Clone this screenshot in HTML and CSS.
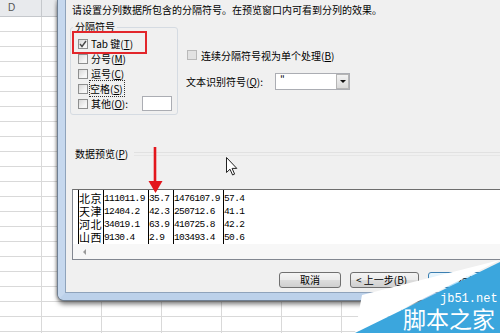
FILE: index.html
```html
<!DOCTYPE html>
<html lang="zh-CN">
<head>
    <meta charset="UTF-8">
    <title>文本分列向导</title>
    <link rel="stylesheet" href="styles.css">
</head>
<body>
<div class="screen">
    <div class="sheet">
        <div class="col-head"><span class="col-d">D</span></div>
        <div class="cells"></div>
    </div>

    <div class="dialog">
        <div class="dlg-body">
            <p class="intro">请设置分列数据所包含的分隔符号。在预览窗口内可看到分列的效果。</p>

            <div class="options">
                <fieldset class="seps">
                    <legend>分隔符号</legend>
                    <div class="chk-row">
                        <span class="chk">
                            <svg width="8" height="8" viewBox="0 0 8 8"><path d="M1 4 L3 6.5 L7 1" fill="none" stroke="#4a4a4a" stroke-width="1.4"/></svg>
                        </span>
                        <span>Tab 键(<u>T</u>)</span>
                    </div>
                    <div class="chk-row"><span class="chk"></span><span>分号(<u>M</u>)</span></div>
                    <div class="chk-row"><span class="chk"></span><span>逗号(<u>C</u>)</span></div>
                    <div class="chk-row"><span class="chk"></span><span class="focus">空格(<u>S</u>)</span></div>
                    <div class="chk-row"><span class="chk"></span><span>其他(<u>O</u>):</span><span class="other-box"></span></div>
                </fieldset>

                <div class="side">
                    <div class="chk-row"><span class="chk dim"></span><span>连续分隔符号视为单个处理(<u>B</u>)</span></div>
                    <div class="qualifier">
                        <span class="q-label">文本识别符号(<u>Q</u>):</span>
                        <div class="combo">
                            <span class="combo-val">"</span>
                            <span class="combo-btn"><span class="tri-down"></span></span>
                        </div>
                    </div>
                </div>
            </div>

            <div class="preview-head">
                <span>数据预览(<u>P</u>)</span>
                <span class="rule"></span>
            </div>

            <div class="preview">
                <div class="cols">
                    <div class="pcol cjk w1"><div>北京</div><div>天津</div><div>河北</div><div>山西</div></div>
                    <div class="pcol w2"><div>111011.9</div><div>12404.2</div><div>34019.1</div><div>9130.4</div></div>
                    <div class="pcol w3"><div>35.7</div><div>42.3</div><div>63.9</div><div>2.9</div></div>
                    <div class="pcol w4"><div>1476107.9</div><div>250712.6</div><div>410725.8</div><div>103493.4</div></div>
                    <div class="pcol w5"><div>57.4</div><div>41.1</div><div>42.2</div><div>50.6</div></div>
                </div>
                <div class="hscroll"><span class="tri-left"></span></div>
            </div>

            <div class="buttons">
                <button class="btn b-cancel">取消</button>
                <button class="btn b-back">&lt; 上一步(<u>B</u>)</button>
                <button class="btn b-next">下一步(<u>N</u>) &gt;</button>
            </div>
        </div>
    </div>

    <!-- annotations drawn over the screenshot -->
    <div class="callout"></div>
    <svg class="red-arrow" width="16" height="48" viewBox="0 0 16 48">
        <path d="M7 0 V36" stroke="#e3161c" stroke-width="2.6"/>
        <path d="M0.5 34 L14.5 34 L7.5 46 Z" fill="#e3161c"/>
    </svg>
    <svg class="cursor" width="12" height="19" viewBox="0 0 12 19">
        <path d="M0.5 0.5 L0.5 15.5 L4 12.2 L6.6 18 L8.6 17.1 L6.1 11.4 L10.8 11.4 Z" fill="#fff" stroke="#222" stroke-width="1"/>
    </svg>

    <div class="mark">
        <svg width="160" height="78" viewBox="0 0 160 78">
            <polygon points="22,40 160,5 15,78" fill="#fff"/>
            <polygon points="160,7 15,78 160,78" fill="#3ba6dd"/>
        </svg>
        <span class="mark-url">jb51.net</span>
        <span class="mark-name">脚本之家</span>
    </div>
</div>
</body>
</html>
```

FILE: styles.css
```css
* {
    box-sizing: border-box;
}
body {
    margin: 0;
    font-family: "Noto Sans CJK SC", sans-serif;
    font-size: 10px;
    color: #000;
    background: #fff;
}
.screen {
    position: relative;
    width: 500px;
    height: 333px;
    overflow: hidden;
}

/* excel sheet behind the dialog */
.sheet {
    height: 100%;
}
.col-head {
    height: 17px;
    border-bottom: 1px solid #c5c8cc;
    background-color: #e8eaed;
    background-image: linear-gradient(to right, transparent 59px, #c5c8cc 59px, #c5c8cc 60px);
    background-size: 60px 100%;
    background-position: -18px 0;
    font-family: "Liberation Sans", sans-serif;
    color: #555;
    line-height: 16px;
}
.col-d {
    padding-left: 8px;
}
.cells {
    height: 316px;
    background-image:
        linear-gradient(to right, transparent 59px, #d9d9d9 59px, #d9d9d9 60px),
        linear-gradient(to bottom, transparent 14px, #d9d9d9 14px, #d9d9d9 15px);
    background-size: 60px 100%, 100% 15px;
    background-position: -18px 0, 0 0;
}

/* dialog window */
.dialog {
    position: absolute;
    left: 58px;
    top: 0;
    width: 470px;
    height: 300px;
    border-left: 7px solid #c6d8ee;
    border-bottom: 7px solid #bcd1ea;
    border-bottom-left-radius: 6px;
    box-shadow: -1px 0 0 #6f7f92, 0 1px 0 #6f7f92, 0 4px 5px rgba(0, 0, 0, 0.55), -2px 0 3px rgba(0, 0, 0, 0.25);
}
.dlg-body {
    height: 293px;
    background: #f0f0f0;
    border-left: 1px solid #8fa3bb;
    border-bottom: 1px solid #8fa3bb;
    padding: 4px 0 0 4px;
}
.intro {
    margin: 0 0 0 2px;
    line-height: 12px;
    white-space: nowrap;
}
.options {
    display: flex;
    align-items: flex-start;
    margin-top: 5px;
}
.seps {
    flex: none;
    width: 108px;
    margin: 0;
    padding: 3px 0 3px 0;
    border: 1px solid #d5dbe2;
    border-radius: 3px;
}
.seps legend {
    margin-left: 2px;
    padding: 0 2px;
    line-height: 12px;
}
.chk-row {
    display: flex;
    align-items: center;
    height: 15px;
    white-space: nowrap;
}
.chk {
    flex: none;
    display: flex;
    align-items: center;
    justify-content: center;
    width: 10px;
    height: 10px;
    margin: 0 3px 0 7px;
    border: 1px solid #8e8f8f;
    background: linear-gradient(135deg, #d8d8d8, #f6f6f6 70%);
}
.chk.dim {
    border-color: #b9b9b9;
    background: #e2e2e2;
    margin-left: 1px;
    margin-right: 4px;
}
.focus {
    outline: 1px dotted #333;
    outline-offset: 0;
    padding: 0 1px 0 0;
    margin-left: -1px;
}
.other-box {
    flex: none;
    width: 30px;
    height: 15px;
    margin: 0 5px 0 auto;
    border: 1px solid #abadb3;
    background: #fff;
}
.side {
    flex: none;
    margin-left: 8px;
    padding-top: 27px;
}
.side .chk-row {
    height: 14px;
}
.qualifier {
    display: flex;
    align-items: center;
    margin-top: 11px;
    white-space: nowrap;
}
.q-label {
    flex: none;
    width: 89px;
}
.combo {
    flex: none;
    display: flex;
    justify-content: space-between;
    width: 75px;
    height: 17px;
    border: 1px solid #abadb3;
    background: #fff;
}
.combo-val {
    padding-left: 4px;
    line-height: 12px;
}
.combo-btn {
    display: flex;
    align-items: center;
    justify-content: center;
    width: 13px;
    border: 1px solid #b5b5b5;
    background: linear-gradient(#f3f3f3, #d9d9d9);
}
.tri-down {
    border-left: 3px solid transparent;
    border-right: 3px solid transparent;
    border-top: 3px solid #111;
}

/* data preview */
.preview-head {
    display: flex;
    align-items: center;
    margin: 33px 0 0 5px;
    line-height: 12px;
    white-space: nowrap;
}
.rule {
    flex: 1;
    height: 4px;
    margin-left: 6px;
    border-top: 1px solid #e1e1e1;
    border-bottom: 1px solid #e6e6e6;
}
.preview {
    width: 450px;
    height: 71px;
    margin: 29px 0 0 2px;
    border: 1px solid #828790;
    border-top-color: #6d6d6d;
    background: #fff;
}
.cols {
    display: flex;
    padding-left: 5px;
}
.pcol {
    flex: none;
    overflow: hidden;
    border-left: 1px solid #000;
    padding-top: 2px;
    font-family: "Liberation Mono", monospace;
    font-size: 9.5px;
    letter-spacing: -0.6px;
    line-height: 13px;
    white-space: nowrap;
}
.pcol.cjk {
    font-family: "Noto Sans CJK SC", sans-serif;
    font-size: 11px;
    letter-spacing: 0.5px;
}
.w1 { width: 25px; }
.w2 { width: 45px; }
.w3 { width: 25px; }
.w4 { width: 50px; }
.w5 { width: 47px; }
.hscroll {
    display: flex;
    align-items: center;
    height: 15px;
    padding-left: 10px;
    background: #f7f7f7;
}
.tri-left {
    border-top: 3px solid transparent;
    border-bottom: 3px solid transparent;
    border-right: 3px solid #9a9a9a;
}

/* wizard buttons */
.buttons {
    display: flex;
    gap: 9px;
    margin-top: 12px;
    padding-left: 209px;
}
.btn {
    flex: none;
    height: 16px;
    padding: 0;
    border: 1px solid #707070;
    border-radius: 3px;
    background: linear-gradient(#f4f4f4, #ebebeb 50%, #dddddd 50%, #cfcfcf);
    font-family: inherit;
    font-size: 10px;
    line-height: 12px;
    color: #000;
    white-space: nowrap;
}
.b-cancel { width: 62px; }
.b-back { width: 69px; text-align: left; padding-left: 5px; }
.b-next {
    width: 72px;
    border-color: #3c7fb1;
    background: linear-gradient(#eaf6fd, #d9f0fc 50%, #bee6fd 50%, #a7d9f5);
}

/* annotations */
.callout {
    position: absolute;
    left: 72px;
    top: 31px;
    width: 75px;
    height: 23px;
    border: 2px solid #e2262b;
}
.red-arrow {
    position: absolute;
    left: 148px;
    top: 147px;
}
.cursor {
    position: absolute;
    left: 226px;
    top: 157px;
}
.mark {
    position: absolute;
    left: 340px;
    top: 255px;
    width: 160px;
    height: 78px;
    color: #fff;
}
.mark svg {
    display: block;
}
.mark-url {
    position: absolute;
    left: 100px;
    top: 39px;
    font-family: "Liberation Mono", monospace;
    font-size: 12px;
    line-height: 11px;
    white-space: nowrap;
}
.mark-name {
    position: absolute;
    left: 63px;
    top: 51px;
    font-size: 23px;
    line-height: 24px;
    white-space: nowrap;
}
```
